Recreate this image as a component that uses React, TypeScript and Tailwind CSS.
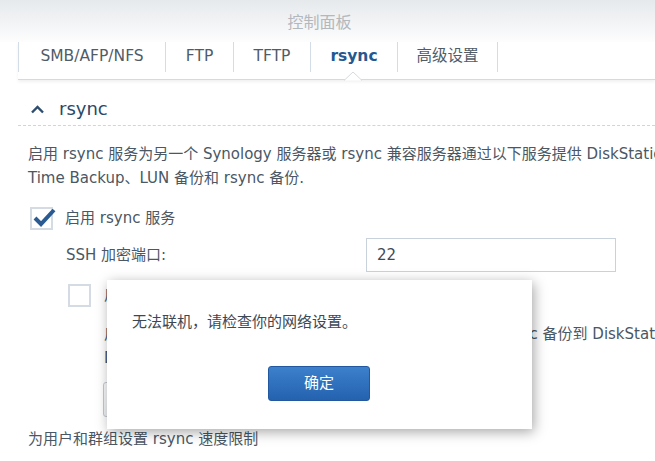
import React from "react";

const font = { fontFamily: '"DejaVu Sans", "Noto Sans CJK SC", sans-serif' };

export default function App() {
  return (
    <div className="relative w-[655px] h-[461px] overflow-hidden bg-white text-[15px] text-[#4a5764]" style={font}>
      {/* header */}
      <div className="h-[42px] bg-gradient-to-b from-[#e6e9ec] to-[#fdfdfd] flex items-center justify-center pr-[16px]">
        <span className="text-[16px] text-[#b3b8bd]" style={{ fontFamily: '"Noto Sans CJK SC", sans-serif' }}>控制面板</span>
      </div>
      {/* tabs */}
      <div className="relative ml-[18px] h-[38px] border-b border-[#d6dadf] shadow-[0_2px_3px_rgba(0,0,0,0.06)] flex items-start">
        {[
          { t: "SMB/AFP/NFS", w: "w-[147px]" },
          { t: "FTP", w: "w-[68px]" },
          { t: "TFTP", w: "w-[77px]" },
          { t: "rsync", w: "w-[87px]", a: true },
          { t: "高级设置", w: "w-[101px]" },
        ].map((tab, i) => (
          <div
            key={i}
            className={`${tab.w} h-[30px] flex items-center justify-center text-[15.5px] border-l border-[#d3dde7] ${i === 4 ? "border-r" : ""} ${
              tab.a ? "font-bold text-[#245890]" : "text-[#505c68]"
            }`}
          >
            {tab.t}
          </div>
        ))}
        <svg className="absolute left-[326px] top-[29px]" width="18" height="10" viewBox="0 0 18 10">
          <path d="M0 9.5 L9 1 L18 9.5" fill="white" stroke="#d6dadf" strokeWidth="1" />
        </svg>
      </div>

      {/* section heading */}
      <div className="ml-[18px] mt-[16px] h-[30px] border-b border-dashed border-[#c9d6e3] flex items-center pl-[12px] pb-[4px]">
        <svg width="15" height="10" viewBox="0 0 15 10" className="mr-[14px]">
          <path d="M2 8.5 L7.5 3 L13 8.5" fill="none" stroke="#2d4d6e" strokeWidth="2.4" />
        </svg>
        <span className="text-[18px] text-[#2a4966]">rsync</span>
      </div>

      <div className="pl-[28px] pt-[16px] whitespace-nowrap">
        <div className="leading-[24px]">
          启用 rsync 服务为另一个 Synology 服务器或 rsync 兼容服务器通过以下服务提供 DiskStation
        </div>
        <div className="leading-[24px]">Time Backup、LUN 备份和 rsync 备份.</div>

        <div className="flex items-center mt-[16px] ml-[2px] h-[24px]">
          <div className="w-[23px] h-[23px] border-2 border-[#d4dbe2] bg-white relative">
            <svg className="absolute left-[1px] top-[-3px]" width="24" height="22" viewBox="0 0 24 22">
              <path d="M2 12 L8 18 L21 4" fill="none" stroke="#2a5a92" strokeWidth="4" />
            </svg>
          </div>
          <span className="ml-[12px]">启用 rsync 服务</span>
        </div>

        <div className="flex items-center mt-[8px] ml-[38px] h-[34px]">
          <span className="w-[300px]">SSH 加密端口:</span>
          <div className="w-[250px] h-[34px] shrink-0 border border-[#c8d2dc] flex items-center pl-[10px] text-[#3f4b57]">22</div>
        </div>

        <div className="flex items-center mt-[11px] ml-[40px] h-[24px]">
          <div className="w-[23px] h-[23px] border-2 border-[#d4dbe2] bg-white" />
          <span className="ml-[13px]">启用 rsync 账户</span>
        </div>
        <div className="ml-[76px] mt-[15px] leading-[24px]">
          启用后，您可以编辑专用<span className="ml-[13px]">rsync</span> 账户，供其他服务器使用 rsync 备份到 DiskStation
        </div>
        <div className="ml-[76px] leading-[24px]">DSM 用户账户将无法通过 rsync 进行备份。</div>
        <div className="ml-[75px] mt-[12px] w-[110px] h-[35px] border border-[#c3cad2] rounded-[3px] bg-gradient-to-b from-[#fafbfc] to-[#eef1f4]" />
        <div className="mt-[10px] leading-[24px]">为用户和群组设置 rsync 速度限制</div>
      </div>

      {/* dialog */}
      <div className="absolute left-[107px] top-[280px] w-[425px] h-[149px] bg-white shadow-[2px_3px_12px_rgba(0,0,0,0.35)] flex flex-col">
        <div className="pl-[25px] pt-[31px] leading-[22px] text-[#3c4955]">无法联机，请检查你的网络设置。</div>
        <div className="flex justify-center mt-[33px] pr-[1px]">
          <button className="w-[102px] h-[35px] rounded-[3px] border border-[#2158a0] bg-gradient-to-b from-[#3d80cc] to-[#2462ae] text-white text-[15px]">
            确定
          </button>
        </div>
      </div>
    </div>
  );
}
